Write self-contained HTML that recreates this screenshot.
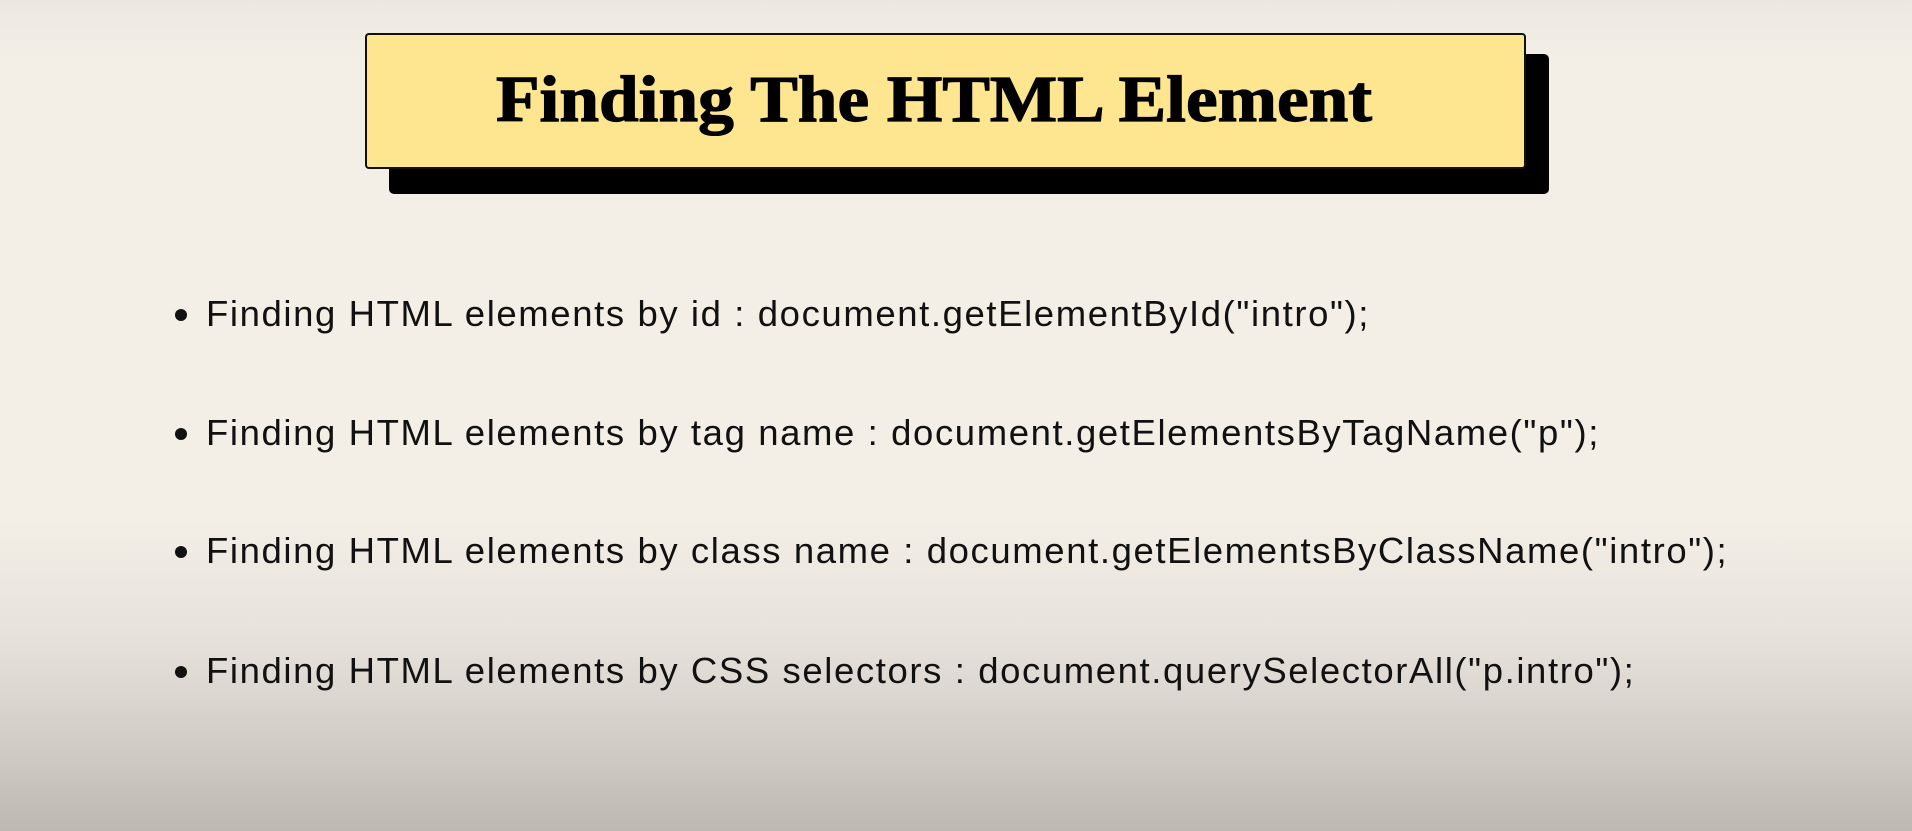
<!DOCTYPE html>
<html><head><meta charset="utf-8"><style>
html,body{margin:0;padding:0}
body{width:1912px;height:831px;overflow:hidden;position:relative;
background:linear-gradient(to bottom,#ece8e1 0px,#f3efe7 60px,#f3efe7 520px,#e6e2db 640px,#d2cdc7 740px,#bdb8b2 831px);
font-family:"Liberation Sans",sans-serif}
.shadow{position:absolute;left:389px;top:54px;width:1160px;height:140px;background:#000;border-radius:5px}
.box{position:absolute;left:365px;top:33px;width:1161px;height:136px;background:#fde68f;border:2px solid #111;border-radius:4px;box-sizing:border-box}
.title{position:absolute;left:353px;top:32px;width:1162px;height:136px;text-align:center;line-height:136px;
font-family:"Liberation Serif",serif;font-weight:bold;font-size:66px;color:#000;transform:scaleX(1.08);-webkit-text-stroke:1.2px #000}
.li{position:absolute;left:206px;font-size:36.5px;color:#111;white-space:nowrap;letter-spacing:1.6px}
.dot{position:absolute;left:175px;width:12px;height:12px;border-radius:50%;background:#111}
</style></head><body>
<div class="shadow"></div>
<div class="box"></div>
<div class="title">Finding The HTML Element</div>
<div class="dot" style="top:309px"></div><div class="li" style="top:293px">Finding HTML elements by id : document.getElementById("intro");</div>
<div class="dot" style="top:428px"></div><div class="li" style="top:412px">Finding HTML elements by tag name : document.getElementsByTagName("p");</div>
<div class="dot" style="top:546px"></div><div class="li" style="top:530px">Finding HTML elements by class name : document.getElementsByClassName("intro");</div>
<div class="dot" style="top:666px"></div><div class="li" style="top:650px">Finding HTML elements by CSS selectors : document.querySelectorAll("p.intro");</div>
</body></html>
